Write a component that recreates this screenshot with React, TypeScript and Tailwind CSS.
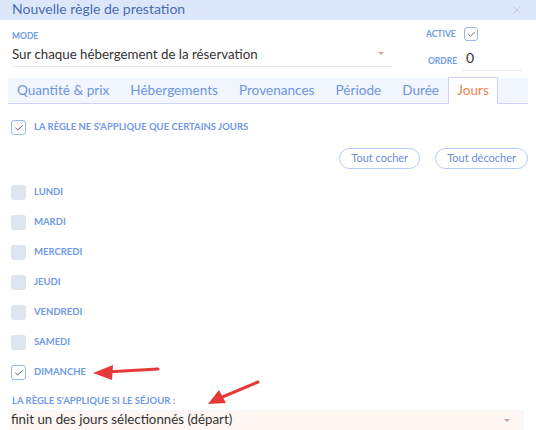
import { X, Check } from "lucide-react";

const days = ["LUNDI", "MARDI", "MERCREDI", "JEUDI", "VENDREDI", "SAMEDI", "DIMANCHE"];
const tabs = ["Quantité & prix", "Hébergements", "Provenances", "Période", "Durée"];

function Box({ checked }: { checked: boolean }) {
  return checked ? (
    <span className="w-[15px] h-[15px] rounded-[3px] border border-[#9db6ee] bg-white flex items-center justify-center">
      <Check size={10} strokeWidth={2} className="text-[#444]" />
    </span>
  ) : (
    <span className="w-[15px] h-[15px] rounded-[3px] bg-[#dfe5ee]" />
  );
}

export default function App() {
  return (
    <div className="relative w-[536px] h-[430px] overflow-hidden bg-white font-['Lato',sans-serif]">
      {/* Header */}
      <div className="h-[20px] bg-[#dce7fb] flex items-center justify-between pl-3 pr-3">
        <span className="text-[14px] leading-none text-[#4a6cb3] -mt-[2px]">Nouvelle règle de prestation</span>
        <X size={14} strokeWidth={1.5} className="text-[#c4c8d0]" />
      </div>

      {/* Mode + active/ordre */}
      <div className="flex pl-3 pr-3 pt-[12px]">
        <div className="w-[380px]">
          <div className="text-[8.5px] font-bold text-[#6f9ae8] leading-none">MODE</div>
          <div className="mt-[2px] h-[24px] border-b border-[#e5e7eb] flex items-start justify-between pr-2 pt-[3px]">
            <span className="text-[13.3px] leading-[16px] text-[#333]">Sur chaque hébergement de la réservation</span>
            <span className="mt-[6px] w-0 h-0 border-l-[3px] border-r-[3px] border-t-[3px] border-l-transparent border-r-transparent border-t-[#c9a59a]" />
          </div>
        </div>
        <div className="ml-auto w-[100px] flex flex-col">
          <div className="flex items-center -mt-[5px] pl-[2px]">
            <span className="text-[8.5px] font-bold text-[#6f9ae8] w-[38px]">ACTIVE</span>
            <span className="w-[14px] h-[14px] rounded-[3px] border border-[#9db6ee] flex items-center justify-center">
              <Check size={9} strokeWidth={2} className="text-[#444]" />
            </span>
          </div>
          <div className="flex items-center mt-[7px] pl-[4px]">
            <span className="text-[8.5px] font-bold text-[#6f9ae8] w-[34px] mt-[4px]">ORDRE</span>
            <span className="w-[60px] h-[23px] border-b border-[#e5e7eb] pl-[4px] text-[14px] text-[#333] leading-[20px]">0</span>
          </div>
        </div>
      </div>

      {/* Tabs */}
      <div className="mx-2 mt-[7px] h-[26px] bg-[#f1f6ff] border-b border-[#cdd0f8] flex items-end">
        <div className="flex h-full items-center gap-[21px] pl-[9px] pr-[9px]">
          {tabs.map((t) => (
            <span key={t} className="text-[13.6px] text-[#6f95dd] -mt-[1px]">{t}</span>
          ))}
        </div>
        <div className="h-[27px] w-[50px] -mb-px bg-white border border-b-0 border-[#cdd0f8] flex items-center justify-center">
          <span className="text-[13.6px] text-[#f2834e] -mt-[1px]">Jours</span>
        </div>
      </div>

      {/* Content */}
      <div className="pl-[11px] pr-2">
        <div className="flex items-center gap-[8px] mt-[16px]">
          <Box checked />
          <span className="text-[9.5px] font-bold text-[#6f9ae8]">LA RÈGLE NE S'APPLIQUE QUE CERTAINS JOURS</span>
        </div>
        <div className="flex justify-end gap-[15px] mt-[13px]">
          <button className="h-[21px] px-[11px] rounded-full border border-[#b3cbf6] text-[11px] text-[#6d8edb]">Tout cocher</button>
          <button className="h-[21px] px-[11px] rounded-full border border-[#b3cbf6] text-[11px] text-[#6d8edb]">Tout décocher</button>
        </div>
        <div className="flex flex-col gap-[15px] mt-[16px]">
          {days.map((d) => (
            <div key={d} className="flex items-center gap-[8px]">
              <Box checked={d === "DIMANCHE"} />
              <span className="text-[9.5px] font-bold text-[#6f9ae8]">{d}</span>
            </div>
          ))}
        </div>
        <div className="mt-[16px] text-[9.5px] font-bold text-[#6f9ae8] leading-none pl-[1px]">LA RÈGLE S'APPLIQUE SI LE SÉJOUR :</div>
        <div className="mt-[4px] h-[23px] bg-[#fdf6f2] border-b-2 border-[#e8875a] flex items-center justify-between pl-[1px] pr-[14px] -ml-[1px] mr-[4px]">
          <span className="text-[13.3px] text-[#333]">finit un des jours sélectionnés (départ)</span>
          <span className="w-0 h-0 border-l-[3px] border-r-[3px] border-t-[3px] border-l-transparent border-r-transparent border-t-[#c9a59a]" />
        </div>
      </div>

      {/* Annotation arrows */}
      <svg className="absolute left-0 top-0 pointer-events-none" width="536" height="430">
        <line x1="158" y1="369" x2="106" y2="372" stroke="#e63a3a" strokeWidth="3" strokeLinecap="round" />
        <polygon points="93,373 113,365 112,380" fill="#e63a3a" />
        <line x1="258" y1="382" x2="220" y2="398" stroke="#e63a3a" strokeWidth="3" strokeLinecap="round" />
        <polygon points="208,404 219,390 226,403" fill="#e63a3a" />
      </svg>
    </div>
  );
}
